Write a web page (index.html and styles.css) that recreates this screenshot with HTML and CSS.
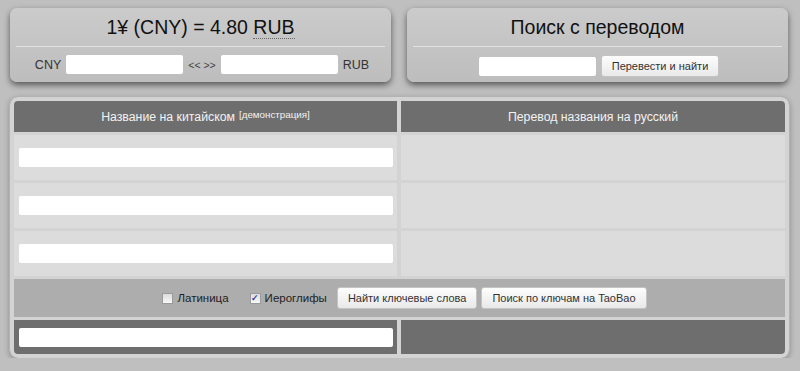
FILE: index.html
```html
<!DOCTYPE html>
<html lang="ru">
<head>
    <meta charset="UTF-8">
    <meta name="viewport" content="width=device-width, initial-scale=1.0">
    <title>Курс юаня и поиск с переводом</title>
    <link rel="stylesheet" href="styles.css">
</head>
<body>
    <div class="top">
        <div class="box">
            <h2 class="box-title">1¥ (CNY) = 4.80 <abbr title="Российский рубль">RUB</abbr></h2>
            <div class="box-row">
                <span class="cur">CNY</span>
                <input type="text" class="field">
                <span class="arrows">&lt;&lt; &gt;&gt;</span>
                <input type="text" class="field">
                <span class="cur">RUB</span>
            </div>
        </div>
        <div class="box">
            <h2 class="box-title">Поиск с переводом</h2>
            <div class="box-row">
                <input type="text" class="field">
                <button class="btn">Перевести и найти</button>
            </div>
        </div>
    </div>

    <div class="panel">
        <div class="head">Название на китайском <sup>[демонстрация]</sup></div>
        <div class="head">Перевод названия на русский</div>

        <div class="cell"><input type="text" class="wide"></div>
        <div class="cell"></div>
        <div class="cell"><input type="text" class="wide"></div>
        <div class="cell"></div>
        <div class="cell"><input type="text" class="wide"></div>
        <div class="cell"></div>

        <div class="controls">
            <label class="check"><span class="tick"></span>Латиница</label>
            <label class="check last"><span class="tick on">&#10003;</span>Иероглифы</label>
            <button class="btn">Найти ключевые слова</button>
            <button class="btn">Поиск по ключам на TaoBao</button>
        </div>

        <div class="foot"><input type="text" class="wide"></div>
        <div class="foot"></div>
    </div>
</body>
</html>
```

FILE: styles.css
```css
body {
    font-family: "Liberation Sans", Arial, sans-serif;
    background-color: #bfbfbf;
    margin: 0;
    padding: 8px 11px 0 10px;
    color: #222;
}
.top {
    display: grid;
    grid-template-columns: 381px 381px;
    gap: 16px;
}
.box {
    background: linear-gradient(#cbcbcb, #bdbdbd);
    border-radius: 7px;
    box-shadow: 0 3px 6px rgba(0, 0, 0, 0.55);
    padding: 0 6px 8px;
    height: 74px;
    box-sizing: border-box;
}
.box-title {
    margin: 0;
    font-size: 19.5px;
    font-weight: normal;
    text-align: center;
    line-height: 38px;
    border-bottom: 1px solid #e2e2e2;
    color: #111;
}
abbr {
    text-decoration: none;
    border-bottom: 1px dotted #666;
}
.box-row {
    display: flex;
    justify-content: center;
    align-items: center;
    gap: 5px;
    padding-top: 8px;
    padding-left: 3px;
    font-size: 12.5px;
}
.cur {
    color: #333;
}
.arrows {
    font-size: 10.5px;
    color: #444;
}
.field {
    width: 117px;
    height: 19px;
    border: none;
    border-radius: 2px;
    background: #fff;
    padding: 0;
    box-sizing: border-box;
}
.btn {
    font-family: "Liberation Sans", Arial, sans-serif;
    font-size: 11px;
    color: #333;
    height: 22px;
    padding: 0 10px;
    border: 1px solid #c4c4c4;
    border-radius: 3px;
    background: linear-gradient(#fdfdfd, #e9e9e9);
}
.panel {
    margin-top: 15px;
    width: 779px;
    box-sizing: border-box;
    border: 4px solid #d3d3d3;
    outline: 1px solid #b3b3b3;
    border-radius: 8px;
    background: #d3d3d3;
    box-shadow: 0 2px 6px rgba(0, 0, 0, 0.35);
    display: grid;
    grid-template-columns: 383px 384px;
    grid-template-rows: 31px 45px 45px 45px 38px 34px;
    column-gap: 4px;
    row-gap: 3px;
    overflow: hidden;
}
.head {
    background: #6e6e6e;
    color: #f2f2f2;
    font-size: 12.3px;
    display: flex;
    justify-content: center;
    align-items: center;
}
.head sup {
    font-size: 9.8px;
    margin-left: 4px;
    position: relative;
    top: -2px;
}
.cell {
    background: #dcdcdc;
    display: flex;
    align-items: center;
    padding: 0 4px 0 5px;
}
.wide {
    width: 100%;
    height: 19px;
    border: none;
    border-radius: 2px;
    background: #fff;
    padding: 0;
}
.controls {
    grid-column: 1 / 3;
    background: #adadad;
    display: flex;
    justify-content: center;
    align-items: center;
    font-size: 11.5px;
    gap: 4px;
    padding-left: 10px;
}
.check {
    display: flex;
    align-items: center;
    color: #222;
    margin-right: 17px;
}
.check.last {
    margin-right: 6px;
}
.tick {
    width: 9px;
    height: 9px;
    border: 1px solid #9a9a9a;
    background: linear-gradient(#dcdcdc, #f8f8f8);
    margin-right: 4px;
    font-size: 9px;
    line-height: 9px;
    text-align: center;
    color: #2f3fa8;
    font-weight: bold;
}
.foot {
    background: #6e6e6e;
    display: flex;
    align-items: center;
    padding: 0 4px 0 5px;
}
```
